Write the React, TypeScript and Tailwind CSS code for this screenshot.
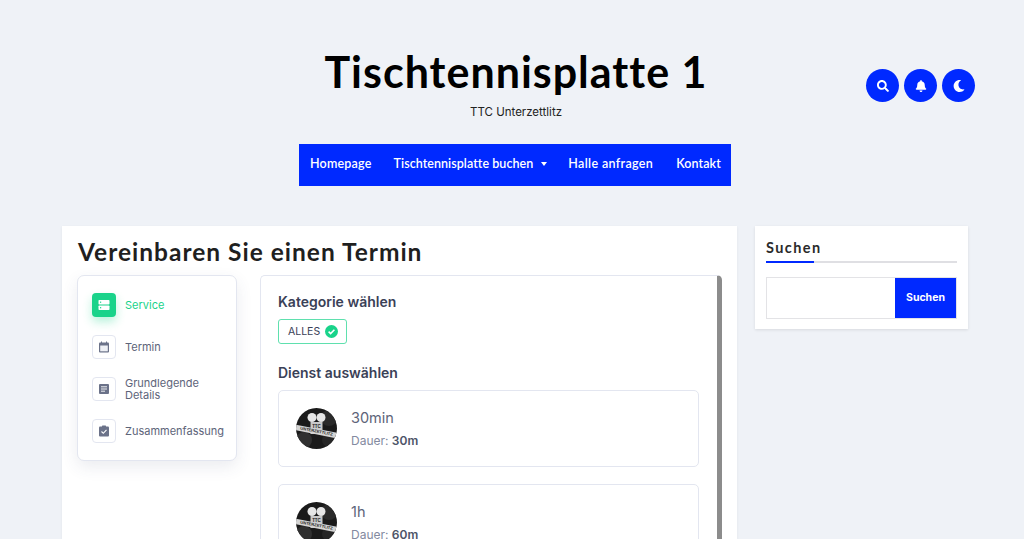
import { FaSearch, FaBell, FaMoon } from "react-icons/fa";

const head = { fontFamily: '"Lato", "Liberation Sans", sans-serif' };
const body = { fontFamily: '"Inter", "Noto Sans", sans-serif' };

function Logo({ id }: { id: string }) {
  return (
    <svg width="41" height="41" viewBox="0 0 41 41" className="shrink-0">
      <defs>
        <clipPath id={id}><circle cx="20.5" cy="20.5" r="20.5" /></clipPath>
      </defs>
      <circle cx="20.5" cy="20.5" r="20.5" fill="#1a1a1a" />
      <g clipPath={`url(#${id})`}>
        <circle cx="8" cy="32" r="8" fill="#303030" />
        <circle cx="33" cy="32" r="7" fill="#262626" />
        <circle cx="33" cy="10" r="8" fill="#2a2a2a" />
        <circle cx="16" cy="9.5" r="4.5" fill="#e6e6e6" />
        <circle cx="25" cy="9.5" r="4.5" fill="#e6e6e6" />
        <rect x="14.5" y="14" width="12" height="12" fill="#c9c9c9" />
        <text x="20.5" y="19.5" textAnchor="middle" fontSize="4.5" fontWeight="700" fill="#222" fontFamily="Liberation Sans, sans-serif">TTC</text>
        <path d="M-1 16.5 L42 25 L41 30.5 L-1 22 Z" fill="#d4d4d4" />
        <text x="20.5" y="24.6" textAnchor="middle" fontSize="4.1" fontWeight="700" fill="#222" fontFamily="Liberation Sans, sans-serif" transform="rotate(11 20.5 23.5)">UNTERZETTLITZ</text>
      </g>
    </svg>
  );
}

function Step({ label, active, icon }: { label: string; active?: boolean; icon: React.ReactNode }) {
  return (
    <div className="flex items-center gap-[9px] h-[24px]">
      <div
        className={
          active
            ? "w-[24px] h-[24px] rounded-[4px] bg-[#19d38a] flex items-center justify-center shrink-0 shadow-[0_5px_10px_rgba(25,211,138,0.3)]"
            : "w-[24px] h-[24px] rounded-[4px] bg-white border border-[#e3e6f0] flex items-center justify-center shrink-0"
        }
      >
        {icon}
      </div>
      <span className={active ? "pt-[1px] text-[11px] leading-[11.5px] text-[#19d38a]" : "pt-[1px] text-[11px] leading-[11.5px] text-[#5d6479]"}>
        {label}
      </span>
    </div>
  );
}

function Service({ id, name, dur }: { id: string; name: string; dur: string }) {
  return (
    <div className="h-[77px] rounded-[5px] border border-[#e3e6f0] bg-white flex items-center pl-[17px] gap-[14px] shrink-0">
      <Logo id={id} />
      <div className="flex flex-col gap-[5px]">
        <div className="text-[14.5px] leading-[20px] text-[#5d6479]">{name}</div>
        <div className="text-[12px] leading-[16px] text-[#838aa0]">
          Dauer: <span className="font-semibold text-[#4d5468]">{dur}</span>
        </div>
      </div>
    </div>
  );
}

export default function App() {
  return (
    <div className="h-[539px] overflow-hidden bg-[#eff2f7] text-black" style={body}>
      <header className="relative flex flex-col items-center pt-[46px] pl-[8px]">
        <h1 className="text-[43px] leading-[52px] font-bold tracking-[1px] text-black" style={head}>
          Tischtennisplatte 1
        </h1>
        <p className="mt-[6px] text-[11.5px] leading-[16px] text-[#222]">TTC Unterzettlitz</p>
        <div className="absolute left-[866px] top-[69px] flex gap-[5px]">
          <button className="w-[33px] h-[33px] rounded-full bg-[#0029ff] flex items-center justify-center">
            <FaSearch size={12} className="text-white" />
          </button>
          <button className="w-[33px] h-[33px] rounded-full bg-[#0029ff] flex items-center justify-center">
            <FaBell size={12} className="text-white" />
          </button>
          <button className="w-[33px] h-[33px] rounded-full bg-[#0029ff] flex items-center justify-center">
            <FaMoon size={12} className="text-white" />
          </button>
        </div>
      </header>

      <div className="flex justify-center mt-[24px] pl-[6px]">
        <nav className="w-[432px] h-[42px] bg-[#0029ff] flex items-center pl-[11px] pb-[2px] text-white text-[12.5px] font-semibold" style={head}>
          <span className="mr-[22px] tracking-[0.2px]">Homepage</span>
          <span className="mr-[21px] flex items-center tracking-[0.05px]">
            Tischtennisplatte buchen
            <span className="ml-[8px] w-0 h-0 border-x-[3.5px] border-x-transparent border-t-[4px] border-t-white" />
          </span>
          <span className="mr-[23px] tracking-[0.35px]">Halle anfragen</span>
          <span className="tracking-[0.1px]">Kontakt</span>
        </nav>
      </div>

      <main className="flex items-start gap-[18px] pl-[62px] mt-[40px]">
        <section className="w-[675px] h-[313px] bg-white pl-[15px] pr-[15px] shadow-[0_1px_3px_rgba(0,0,0,0.06)] overflow-hidden">
          <h2 className="pt-[11px] pl-[1px] text-[24.5px] leading-[30px] font-bold tracking-[1px] text-[#1f1f1f]" style={head}>
            Vereinbaren Sie einen Termin
          </h2>
          <div className="flex items-start gap-[23px] mt-[8px]">
            <aside className="w-[160px] h-[186px] shrink-0 rounded-[7px] border border-[#e3e6f0] bg-white shadow-[0_6px_16px_rgba(60,70,110,0.1)] pl-[14px] pt-[17px] flex flex-col gap-[18px]">
              <Step
                active
                label="Service"
                icon={
                  <svg width="12" height="12" viewBox="0 0 12 12" fill="white">
                    <rect x="0.5" y="1" width="11" height="4.5" rx="0.8" />
                    <rect x="0.5" y="6.5" width="11" height="4.5" rx="0.8" />
                    <rect x="2" y="2.6" width="1.2" height="1.2" fill="#19d38a" />
                    <rect x="2" y="8.1" width="1.2" height="1.2" fill="#19d38a" />
                  </svg>
                }
              />
              <Step
                label="Termin"
                icon={
                  <svg width="12" height="12" viewBox="0 0 12 12" fill="#6b7289">
                    <rect x="1" y="1.5" width="10" height="10" rx="1" />
                    <rect x="2.2" y="4.5" width="7.6" height="5.8" fill="#eef0f5" />
                    <rect x="3" y="0.5" width="1" height="2" />
                    <rect x="8" y="0.5" width="1" height="2" />
                  </svg>
                }
              />
              <Step
                label="Grundlegende Details"
                icon={
                  <svg width="12" height="12" viewBox="0 0 12 12">
                    <rect x="1" y="1" width="10" height="10" rx="1" fill="#6b7289" />
                    <path d="M3 3.8H9M3 6H9M3 8.2H7" stroke="white" strokeWidth="0.9" />
                  </svg>
                }
              />
              <Step
                label="Zusammenfassung"
                icon={
                  <svg width="12" height="12" viewBox="0 0 12 12">
                    <rect x="1" y="1.5" width="10" height="10" rx="1" fill="#6b7289" />
                    <rect x="4" y="0.5" width="4" height="2" rx="0.5" fill="#6b7289" />
                    <path d="M3.5 6.5L5.3 8.3L8.5 4.8" stroke="white" strokeWidth="1.1" fill="none" />
                  </svg>
                }
              />
            </aside>
            <div className="w-[462px] h-[400px] shrink-0 rounded-[5px] border border-[#e3e6f0] border-r-[5px] border-r-[#8c8c8c] bg-white pl-[17px] pr-[18px] pt-[16px]">
              <h3 className="text-[14px] leading-[20px] font-semibold text-[#3a4157]">Kategorie wählen</h3>
              <div className="mt-[7px] w-[69px] h-[25px] rounded-[3px] border border-[#5fe0ae] flex items-center pl-[9px] gap-[5px] text-[10.5px] text-[#3a4157]">
                ALLES
                <svg width="13" height="13" viewBox="0 0 13 13">
                  <circle cx="6.5" cy="6.5" r="6.5" fill="#19d38a" />
                  <path d="M3.6 6.7L5.6 8.6L9.4 4.8" stroke="white" strokeWidth="1.6" fill="none" />
                </svg>
              </div>
              <h3 className="mt-[19px] text-[14px] leading-[20px] font-semibold text-[#3a4157]">Dienst auswählen</h3>
              <div className="mt-[7px] flex flex-col gap-[17px]">
                <Service id="a" name="30min" dur="30m" />
                <Service id="b" name="1h" dur="60m" />
              </div>
            </div>
          </div>
        </section>

        <aside className="w-[213px] h-[103px] bg-white shadow-[0_1px_3px_rgba(0,0,0,0.1)] px-[11px] pt-[13px]">
          <div className="text-[14.5px] leading-[18px] font-bold tracking-[1.4px] text-[#2a2a2a]" style={head}>Suchen</div>
          <div className="relative mt-[4px] h-[2px] bg-[#dfdfe3]">
            <div className="absolute left-0 top-0 h-[2px] w-[48px] bg-[#0029ff]" />
          </div>
          <div className="mt-[14px] h-[42px] flex border border-[#e3e3e6]">
            <div className="flex-1 bg-white" />
            <button className="w-[61px] bg-[#0029ff] text-white text-[10.5px] font-bold">Suchen</button>
          </div>
        </aside>
      </main>
    </div>
  );
}
